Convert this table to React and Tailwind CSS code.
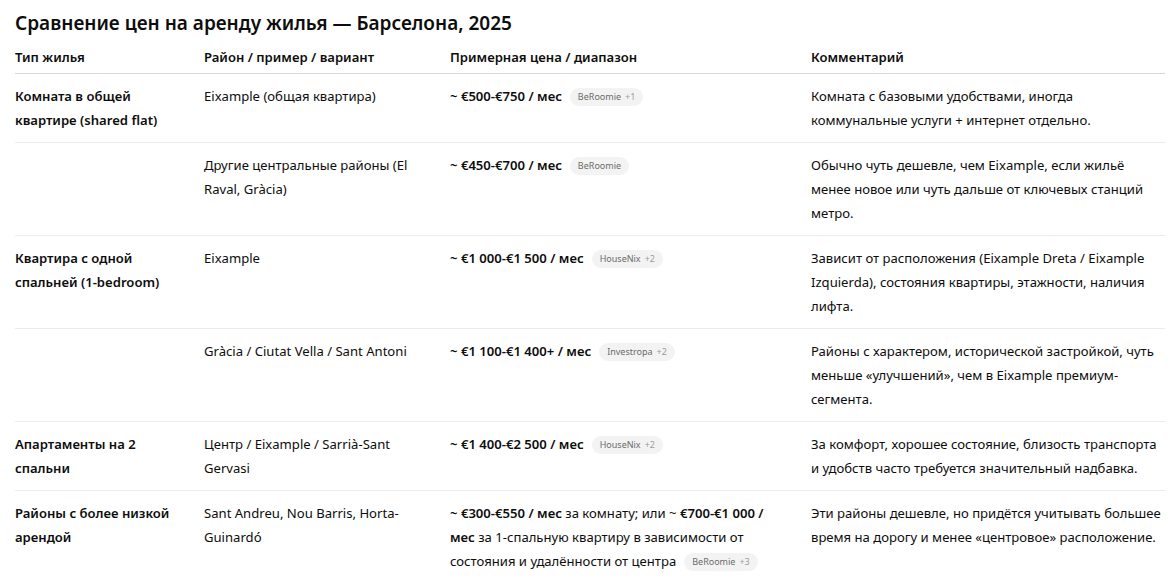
import React from "react";

function Badge({ name, extra }) {
  return (
    <span className="ml-[8px] inline-block h-[18px] rounded-full bg-[#f3f3f3] px-[8px] align-middle text-[9px] font-normal leading-[18px] text-[#6b6b6b]">
      {name}
      {extra && <span className="ml-[4px] text-[#9b9b9b]">{extra}</span>}
    </span>
  );
}

const rows = [
  {
    type: "Комната в общей квартире (shared flat)",
    area: "Eixample (общая квартира)",
    price: (
      <>
        <b className="font-semibold">~ €500-€750 / мес</b>
        <Badge name="BeRoomie" extra="+1" />
      </>
    ),
    note: "Комната с базовыми удобствами, иногда коммунальные услуги + интернет отдельно.",
  },
  {
    type: "",
    area: "Другие центральные районы (El Raval, Gràcia)",
    price: (
      <>
        <b className="font-semibold">~ €450-€700 / мес</b>
        <Badge name="BeRoomie" />
      </>
    ),
    note: "Обычно чуть дешевле, чем Eixample, если жильё менее новое или чуть дальше от ключевых станций метро.",
  },
  {
    type: "Квартира с одной спальней (1-bedroom)",
    area: "Eixample",
    price: (
      <>
        <b className="font-semibold">~ €1 000-€1 500 / мес</b>
        <Badge name="HouseNix" extra="+2" />
      </>
    ),
    note: "Зависит от расположения (Eixample Dreta / Eixample Izquierda), состояния квартиры, этажности, наличия лифта.",
  },
  {
    type: "",
    area: "Gràcia / Ciutat Vella / Sant Antoni",
    price: (
      <>
        <b className="font-semibold">~ €1 100-€1 400+ / мес</b>
        <Badge name="Investropa" extra="+2" />
      </>
    ),
    note: "Районы с характером, исторической застройкой, чуть меньше «улучшений», чем в Eixample премиум-сегмента.",
  },
  {
    type: "Апартаменты на 2 спальни",
    area: "Центр / Eixample / Sarrià-Sant Gervasi",
    price: (
      <>
        <b className="font-semibold">~ €1 400-€2 500 / мес</b>
        <Badge name="HouseNix" extra="+2" />
      </>
    ),
    note: "За комфорт, хорошее состояние, близость транспорта и удобств часто требуется значительный надбавка.",
  },
  {
    type: "Районы с более низкой арендой",
    area: "Sant Andreu, Nou Barris, Horta-Guinardó",
    price: (
      <>
        <b className="font-semibold">~ €300-€550 / мес</b> за комнату; или ~{" "}
        <b className="font-semibold">€700-€1 000 / мес</b> за 1-спальную квартиру в зависимости от состояния и удалённости от центра
        <Badge name="BeRoomie" extra="+3" />
      </>
    ),
    note: "Эти районы дешевле, но придётся учитывать большее время на дорогу и менее «центровое» расположение.",
  },
];

export default function App() {
  return (
    <div
      className="min-h-[586px] w-[1176px] overflow-hidden bg-white pl-[15px] pr-[11px] pt-[9px] text-[#0d0d0d]"
      style={{ fontFamily: '"Noto Sans", "Open Sans", sans-serif' }}
    >
      <h1 className="text-[19px] font-semibold leading-[28px]">
        Сравнение цен на аренду жилья — Барселона, 2025
      </h1>
      <table className="mt-[5px] w-[1150px] table-fixed border-collapse text-left text-[13.1px] leading-[24px]">
        <colgroup>
          <col className="w-[189px]" />
          <col className="w-[246px]" />
          <col className="w-[361px]" />
          <col className="w-[354px]" />
        </colgroup>
        <thead>
          <tr className="border-b border-[#d9d9d9]">
            <th className="pb-[4px] pr-[12px] pt-[3px] font-semibold">Тип жилья</th>
            <th className="pb-[4px] pr-[12px] pt-[3px] font-semibold">Район / пример / вариант</th>
            <th className="pb-[4px] pr-[12px] pt-[3px] font-semibold">Примерная цена / диапазон</th>
            <th className="pb-[4px] pt-[3px] font-semibold">Комментарий</th>
          </tr>
        </thead>
        <tbody>
          {rows.map((r, i) => (
            <tr key={i} className={i < rows.length - 1 ? "border-b border-[#ececec]" : ""}>
              <td className="pb-[10px] pr-[16px] pt-[10px] align-top font-semibold">{r.type}</td>
              <td className="pb-[10px] pr-[16px] pt-[10px] align-top">{r.area}</td>
              <td className="pb-[10px] pr-[28px] pt-[10px] align-top">{r.price}</td>
              <td className="pb-[10px] pt-[10px] align-top">{r.note}</td>
            </tr>
          ))}
        </tbody>
      </table>
    </div>
  );
}
